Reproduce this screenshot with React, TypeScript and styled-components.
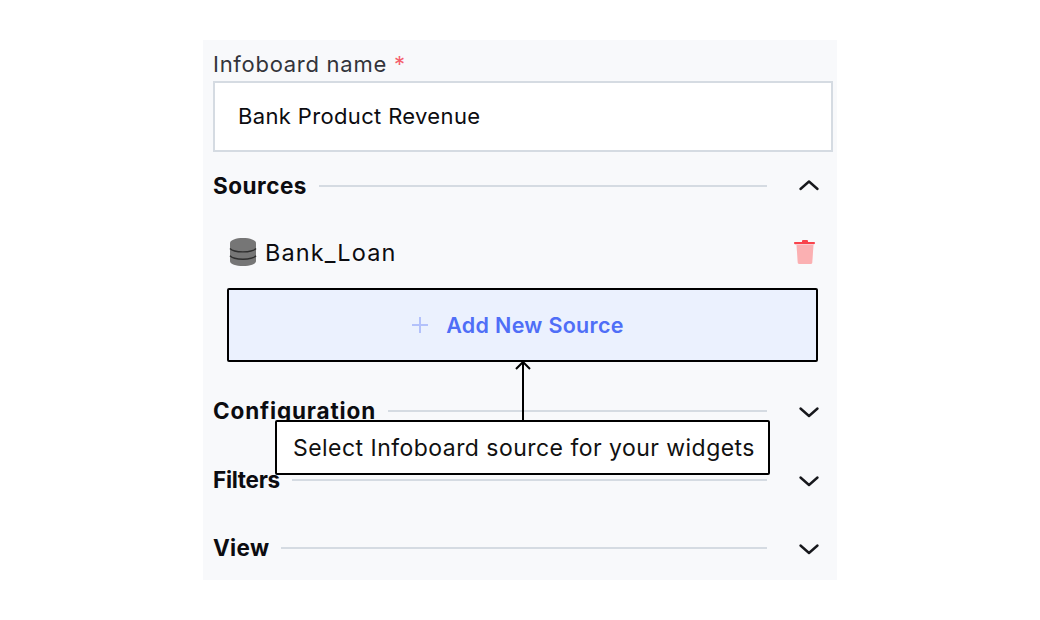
import * as React from "react";

import styled, { createGlobalStyle } from "styled-components";

const Colors = {
  panel: "#f8f9fb",
  line: "#d5dbe2",
  ink: "#0c0c10",
  blue: "#4f6ef7"
};

const Fonts = {
  standard: '"Inter", "Liberation Sans", sans-serif'
};

const GlobalStyle = createGlobalStyle`
  html, body {
    margin: 0;
    padding: 0;
    background: #ffffff;
  }
`;

const Page = styled.div`
  width: 1040px;
  height: 620px;
  display: flex;
  align-items: center;
  justify-content: center;
  font-family: ${Fonts.standard};
  color: ${Colors.ink};
`;

const Panel = styled.div`
  position: relative;
  box-sizing: border-box;
  width: 634px;
  height: 540px;
  padding: 10px 4px 0 10px;
  background: ${Colors.panel};
`;

const FieldLabel = styled.div`
  height: 31px;
  font-size: 22px;
  line-height: 29px;
  color: #33343a;
  letter-spacing: 0.72px;
`;

const Required = styled.span`
  color: #f4606c;
  margin-left: 7px;
`;

const NameInput = styled.div`
  box-sizing: border-box;
  height: 71px;
  display: flex;
  align-items: center;
  padding: 0 0 2px 23px;
  border: 2px solid ${Colors.line};
  background: #ffffff;
  font-size: 22px;
  letter-spacing: 0.35px;
`;

const SectionRow = styled.div<{ $top: number }>`
  display: flex;
  align-items: center;
  height: 28px;
  margin-top: ${p => p.$top}px;
  padding-right: 12px;
`;

const SectionTitle = styled.div<{ $spacing: number }>`
  font-size: 22.5px;
  line-height: 28px;
  font-weight: 700;
  letter-spacing: ${p => p.$spacing}px;
`;

const Rule = styled.div`
  flex: 1;
  height: 2px;
  margin: 0 30px 0 12px;
  background: ${Colors.line};
`;

const Chevron = styled.svg`
  display: block;
  width: 24px;
  height: 24px;
  fill: none;
  stroke: #17181c;
  stroke-width: 2.4;
  stroke-linecap: round;
  stroke-linejoin: round;
`;

const SourceRow = styled.div`
  display: flex;
  align-items: center;
  height: 34px;
  margin-top: 35px;
  padding: 0 17px 0 16px;
`;

const SourceName = styled.div`
  flex: 1;
  margin-left: 8px;
  font-size: 23.5px;
  letter-spacing: 1.1px;
`;

const AddButton = styled.div`
  box-sizing: border-box;
  display: flex;
  align-items: center;
  justify-content: center;
  gap: 17px;
  width: 591px;
  height: 74px;
  margin: 19px 0 0 14px;
  padding-right: 10px;
  border: 2px solid #000000;
  border-radius: 2px;
  background: #ebf1fe;
  font-size: 21.5px;
  font-weight: 600;
  letter-spacing: 0.3px;
  color: ${Colors.blue};
`;

const Callout = styled.div`
  position: absolute;
  left: 72px;
  top: 380px;
  box-sizing: border-box;
  width: 495px;
  height: 55px;
  display: flex;
  align-items: center;
  padding-left: 16px;
  border: 2px solid #000000;
  border-radius: 2px;
  background: #ffffff;
  font-size: 23px;
  letter-spacing: 0.46px;
  white-space: nowrap;
  color: #111111;
`;

const Arrow = styled.svg`
  position: absolute;
  left: 310px;
  top: 320px;
  width: 20px;
  height: 61px;
  fill: none;
  stroke: #000000;
  stroke-width: 2;
`;

const ChevronIcon = ({ up }: { up?: boolean }) => (
  <Chevron viewBox="0 0 24 24">
    <path d={up ? "M3.500 15 12 7.500l8.500 7.500" : "M3.500 9.500 12 17l8.500-7.500"} />
  </Chevron>
);

const Section = ({
  title,
  top,
  spacing,
  up
}: {
  title: string;
  top: number;
  spacing: number;
  up?: boolean;
}) => (
  <SectionRow $top={top}>
    <SectionTitle $spacing={spacing}>{title}</SectionTitle>
    <Rule />
    <ChevronIcon up={up} />
  </SectionRow>
);

const DatabaseIcon = () => (
  <svg width="28" height="30" viewBox="0 0 28 30">
    <path
      fill="#767676"
      d="M14 1C7 1 1 3 1 6.200V24c0 3.200 6 5 13 5s13-1.800 13-5V6.200C27 3 21 1 14 1z"
    />
    <path
      fill="none"
      stroke="#2e2e2e"
      strokeWidth="1.400"
      d="M1 11.500c2.200 2.600 7.400 3.400 13 3.400s10.800-.8 13-3.400M1 18.800c2.200 2.600 7.400 3.400 13 3.400s10.800-.8 13-3.400"
    />
  </svg>
);

const TrashIcon = () => (
  <svg width="22" height="26" viewBox="0 0 22 26">
    <path fill="#fbb0b2" d="M2.500 6h17l-1.200 17.500c-.1 1-1 1.500-2 1.500H5.700c-1 0-1.900-.5-2-1.500z" />
    <path fill="#f8434b" d="M8 2.200c0-.7.500-1.200 1.200-1.200h3.600c.7 0 1.200.5 1.200 1.200V3h6c.6 0 1 .5 1 1s-.4 1.200-1 1.200H1c-.6 0-1-.6-1-1.200s.4-1 1-1h7z" />
  </svg>
);

const PlusIcon = () => (
  <svg width="18" height="18" viewBox="0 0 18 18" fill="none" stroke="#b3c1fb" strokeWidth="2">
    <path d="M9 1v16M1 9h16" />
  </svg>
);

const App = () => (
  <Page>
    <GlobalStyle />
    <Panel>
      <FieldLabel>
        Infoboard name<Required>*</Required>
      </FieldLabel>
      <NameInput>Bank Product Revenue</NameInput>
      <Section title="Sources" top={20} spacing={0.5} up />
      <SourceRow>
        <DatabaseIcon />
        <SourceName>Bank_Loan</SourceName>
        <TrashIcon />
      </SourceRow>
      <AddButton>
        <PlusIcon />
        Add New Source
      </AddButton>
      <Section title="Configuration" top={35} spacing={0.85} />
      <Section title="Filters" top={41} spacing={-0.3} />
      <Section title="View" top={40} spacing={0.3} />
      <Arrow viewBox="0 0 20 61">
        <path d="M10 61V2M3 9l7-7 7 7" />
      </Arrow>
      <Callout>Select Infoboard source for your widgets</Callout>
    </Panel>
  </Page>
);

export default App;
